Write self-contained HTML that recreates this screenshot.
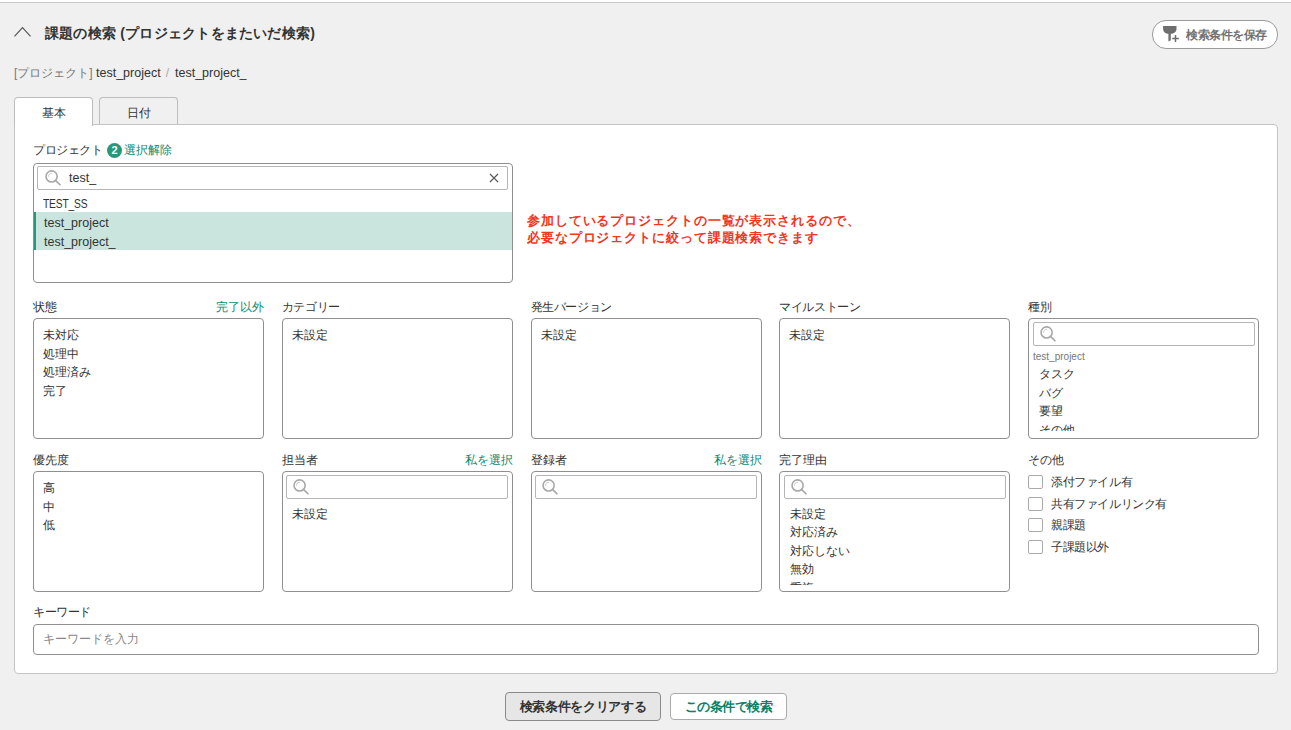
<!DOCTYPE html>
<html lang="ja">
<head>
<meta charset="utf-8">
<style>
*{box-sizing:border-box;margin:0;padding:0}
html,body{width:1291px;height:730px;overflow:hidden}
body{background:#f0f0f0;font-family:"Liberation Sans",sans-serif;color:#333;font-size:12px;position:relative}
.abs{position:absolute}
.topline{left:0;top:0;width:1291px;height:3px;background:#fff;border-bottom:1px solid #c8c8c8}
.title{left:45px;top:25px;font-size:14px;font-weight:bold;color:#333;white-space:nowrap;line-height:17px;letter-spacing:0.23px}
.savebtn{left:1152px;top:20px;width:126px;height:29px;border:1px solid #9a9a9a;border-radius:14px;background:#fff}
.savetxt{left:1186px;top:28px;letter-spacing:-0.45px;font-size:12px;line-height:15px;color:#727272;font-weight:bold;white-space:nowrap}
.crumb{left:14px;top:66px;font-size:12px;line-height:15px;white-space:nowrap;color:#333}
.crumb .g{color:#777}
.crumb .sl{color:#aaa;margin:0 6px 0 5px}
.tab{top:97px;height:28px;border:1px solid #bdbdbd;border-bottom:none;border-radius:4px 4px 0 0;text-align:center;font-size:12px;line-height:29px;color:#333}
.panel{left:14px;top:124px;width:1264px;height:550px;background:#fff;border:1px solid #c4c4c4;border-radius:0 4px 4px 4px}
.lbl{font-size:12px;line-height:15px;color:#333;white-space:nowrap}
.link{color:#0e8a6e}
.badge{left:107px;top:143px;width:15px;height:15px;border-radius:50%;background:#26997a;color:#fff;font-weight:bold;font-size:11px;line-height:15px;text-align:center}
.box{border:1px solid #8f8f8f;border-radius:4px;background:#fff;overflow:hidden}
.srch{border:1px solid #b5b5b5;background:#fff;border-radius:2px}
.item{font-size:12px;line-height:15px;color:#333;white-space:nowrap}
.hl{background:#c9e5dd;border-left:2px solid #26997a}
.small{font-size:10px;line-height:14px;color:#777;white-space:nowrap}
.clip{overflow:hidden}
.chk{width:15px;height:14px;border:1px solid #aaa;border-radius:2px;background:#fff}
.kw{border:1px solid #8f8f8f;border-radius:4px;background:#fff;font-size:12px;line-height:29px;padding-left:9px;color:#888}
.red{color:#f0371e;font-weight:bold;font-size:13px;line-height:17px;white-space:nowrap;letter-spacing:0.9px}
.btn1{left:505px;top:692px;width:156px;height:29px;background:#e6e6e6;border:1px solid #8a8a8a;border-radius:4px;font-size:13px;font-weight:bold;line-height:27px;text-align:center;color:#333;letter-spacing:-0.35px}
.btn2{left:670px;top:693px;width:117px;height:27px;background:#fff;border:1px solid #aaa;border-radius:4px;font-size:13px;font-weight:bold;line-height:25px;text-align:center;color:#0a8068;letter-spacing:-0.45px}

.lat{font-size:12.5px}
.caps{font-size:12.5px;letter-spacing:-0.2px;transform:scaleX(0.82);transform-origin:0 0}

.k{letter-spacing:-0.4px}

</style>
</head>
<body>
<div class="abs topline"></div>
<svg class="abs" style="left:13px;top:26px" width="20" height="13" viewBox="0 0 20 13"><polyline points="1.5,10.4 9.5,1.6 17.5,10.4" fill="none" stroke="#555" stroke-width="1.15"/></svg>
<div class="abs title">課題の検索 (プロジェクトをまたいだ検索)</div>
<div class="abs savebtn"></div>
<svg class="abs" style="left:1158px;top:22px" width="26" height="22" viewBox="0 0 26 22"><path d="M5.1 4.1H18.5V6.9C18.5 9.8 15.8 11.7 12.8 11.7V18.2L10.4 19.6V11.7C7.6 11.7 5.1 9.8 5.1 6.9Z" fill="#6e6e6e"/><path d="M14.2 16.5H20.8M17.5 13.1V19.9" stroke="#6e6e6e" stroke-width="1.5"/></svg>
<div class="abs savetxt">検索条件を保存</div>
<div class="abs crumb"><span class="g">[プロジェクト]</span> <span class="lat">test_project</span><span class="g sl">/</span><span class="lat">test_project_</span></div>
<div class="abs panel"></div>
<div class="abs tab" style="left:14px;width:79px;background:#fff;z-index:2;height:29px;line-height:31px">基本</div>
<div class="abs tab" style="left:99px;width:79px;background:#f0f0f0;height:27px;line-height:30px">日付</div>
<div class="abs lbl k" style="left:33px;top:143px">プロジェクト</div>
<div class="abs badge">2</div>
<div class="abs lbl link" style="left:124px;top:143px">選択解除</div>
<div class="abs box" style="left:33px;top:163px;width:480px;height:120px"></div>
<div class="abs srch" style="left:37px;top:166px;width:471px;height:24px"></div><svg class="abs" style="left:43px;top:168px" width="20" height="20" viewBox="0 0 20 20"><circle cx="8.60" cy="8.45" r="5.55" fill="none" stroke="#a8a8a8" stroke-width="1.6"/><path d="M12.70 12.55L17.00 16.75" stroke="#a8a8a8" stroke-width="1.7" stroke-linecap="round"/><path d="M5.50 8.65A3.1 3.1 0 0 1 8.80 5.35" stroke="#b8b8b8" stroke-width="0.85" fill="none"/></svg><svg class="abs" style="left:489px;top:173px" width="10" height="10" viewBox="0 0 10 10"><path d="M1 1L9 9M9 1L1 9" stroke="#555" stroke-width="1.1" fill="none"/></svg>
<div class="abs" style="left:69px;top:170px;font-size:12.5px;line-height:16px" class="lat">test_</div>
<div class="abs hl" style="left:34px;top:212px;width:478px;height:38px"></div>
<div class="abs item lat caps" style="left:43px;top:197.0px">TEST_SS</div>
<div class="abs item lat" style="left:44px;top:216px">test_project</div><div class="abs item lat" style="left:44px;top:235px">test_project_</div>
<div class="abs red" style="left:527px;top:212px">参加しているプロジェクトの一覧が表示されるので、<br>必要なプロジェクトに絞って課題検索できます</div>
<div class="abs lbl k" style="left:33px;top:300px">状態</div>
<div class="abs box" style="left:33px;top:318px;width:231px;height:121px"></div>
<div class="abs lbl k" style="left:281.75px;top:300px">カテゴリー</div>
<div class="abs box" style="left:281.75px;top:318px;width:231px;height:121px"></div>
<div class="abs lbl k" style="left:530.5px;top:300px">発生バージョン</div>
<div class="abs box" style="left:530.5px;top:318px;width:231px;height:121px"></div>
<div class="abs lbl k" style="left:779.25px;top:300px">マイルストーン</div>
<div class="abs box" style="left:779.25px;top:318px;width:231px;height:121px"></div>
<div class="abs lbl k" style="left:1028px;top:300px">種別</div>
<div class="abs box" style="left:1028px;top:318px;width:231px;height:121px"></div>
<div class="abs lbl link" style="left:33px;width:231px;text-align:right;top:300px">完了以外</div>
<div class="abs item" style="left:43px;top:328.0px">未対応</div><div class="abs item" style="left:43px;top:346.5px">処理中</div><div class="abs item" style="left:43px;top:365.0px">処理済み</div><div class="abs item" style="left:43px;top:383.5px">完了</div>
<div class="abs item" style="left:291.75px;top:328.0px">未設定</div>
<div class="abs item" style="left:540.5px;top:328.0px">未設定</div>
<div class="abs item" style="left:789.25px;top:328.0px">未設定</div>
<div class="abs srch" style="left:1033px;top:322px;width:222px;height:24px"></div><svg class="abs" style="left:1038px;top:324px" width="20" height="20" viewBox="0 0 20 20"><circle cx="8.60" cy="8.45" r="5.55" fill="none" stroke="#a8a8a8" stroke-width="1.6"/><path d="M12.70 12.55L17.00 16.75" stroke="#a8a8a8" stroke-width="1.7" stroke-linecap="round"/><path d="M5.50 8.65A3.1 3.1 0 0 1 8.80 5.35" stroke="#b8b8b8" stroke-width="0.85" fill="none"/></svg>
<div class="abs small" style="left:1033px;top:350px">test_project</div>
<div class="abs clip" style="left:1029px;top:360px;width:228px;height:70.5px"><div class="abs item" style="left:10px;top:7.0px">タスク</div><div class="abs item" style="left:10px;top:25.6px">バグ</div><div class="abs item" style="left:10px;top:44.2px">要望</div><div class="abs item" style="left:10px;top:62.800000000000004px">その他</div></div>
<div class="abs lbl" style="left:33px;top:453px">優先度</div>
<div class="abs box" style="left:33px;top:471px;width:231px;height:121px"></div>
<div class="abs lbl" style="left:281.75px;top:453px">担当者</div>
<div class="abs box" style="left:281.75px;top:471px;width:231px;height:121px"></div>
<div class="abs lbl" style="left:530.5px;top:453px">登録者</div>
<div class="abs box" style="left:530.5px;top:471px;width:231px;height:121px"></div>
<div class="abs lbl" style="left:779.25px;top:453px">完了理由</div>
<div class="abs box" style="left:779.25px;top:471px;width:231px;height:121px"></div>
<div class="abs lbl" style="left:1028px;top:453px">その他</div>
<div class="abs lbl link" style="left:281.75px;width:231px;text-align:right;top:453px">私を選択</div>
<div class="abs lbl link" style="left:530.5px;width:231px;text-align:right;top:453px">私を選択</div>
<div class="abs item" style="left:43px;top:481.0px">高</div><div class="abs item" style="left:43px;top:499.5px">中</div><div class="abs item" style="left:43px;top:518.0px">低</div>
<div class="abs srch" style="left:286px;top:475px;width:222px;height:24px"></div><svg class="abs" style="left:291px;top:477px" width="20" height="20" viewBox="0 0 20 20"><circle cx="8.60" cy="8.45" r="5.55" fill="none" stroke="#a8a8a8" stroke-width="1.6"/><path d="M12.70 12.55L17.00 16.75" stroke="#a8a8a8" stroke-width="1.7" stroke-linecap="round"/><path d="M5.50 8.65A3.1 3.1 0 0 1 8.80 5.35" stroke="#b8b8b8" stroke-width="0.85" fill="none"/></svg>
<div class="abs item" style="left:291.75px;top:507.0px">未設定</div>
<div class="abs srch" style="left:535px;top:475px;width:222px;height:24px"></div><svg class="abs" style="left:540px;top:477px" width="20" height="20" viewBox="0 0 20 20"><circle cx="8.60" cy="8.45" r="5.55" fill="none" stroke="#a8a8a8" stroke-width="1.6"/><path d="M12.70 12.55L17.00 16.75" stroke="#a8a8a8" stroke-width="1.7" stroke-linecap="round"/><path d="M5.50 8.65A3.1 3.1 0 0 1 8.80 5.35" stroke="#b8b8b8" stroke-width="0.85" fill="none"/></svg>
<div class="abs srch" style="left:784px;top:475px;width:222px;height:24px"></div><svg class="abs" style="left:789px;top:477px" width="20" height="20" viewBox="0 0 20 20"><circle cx="8.60" cy="8.45" r="5.55" fill="none" stroke="#a8a8a8" stroke-width="1.6"/><path d="M12.70 12.55L17.00 16.75" stroke="#a8a8a8" stroke-width="1.7" stroke-linecap="round"/><path d="M5.50 8.65A3.1 3.1 0 0 1 8.80 5.35" stroke="#b8b8b8" stroke-width="0.85" fill="none"/></svg>
<div class="abs clip" style="left:780.25px;top:500px;width:228px;height:85px"><div class="abs item" style="left:10px;top:6.5px">未設定</div><div class="abs item" style="left:10px;top:25.0px">対応済み</div><div class="abs item" style="left:10px;top:43.5px">対応しない</div><div class="abs item" style="left:10px;top:62.0px">無効</div><div class="abs item" style="left:10px;top:80.5px">重複</div></div>
<div class="abs chk" style="left:1028px;top:475.0px"></div>
<div class="abs item k" style="left:1051px;top:475.0px">添付ファイル有</div>
<div class="abs chk" style="left:1028px;top:496.7px"></div>
<div class="abs item k" style="left:1051px;top:496.7px">共有ファイルリンク有</div>
<div class="abs chk" style="left:1028px;top:518.4px"></div>
<div class="abs item k" style="left:1051px;top:518.4px">親課題</div>
<div class="abs chk" style="left:1028px;top:540.1px"></div>
<div class="abs item k" style="left:1051px;top:540.1px">子課題以外</div>
<div class="abs lbl k" style="left:33px;top:605px">キーワード</div>
<div class="abs kw" style="left:33px;top:624px;width:1226px;height:31px">キーワードを入力</div>
<div class="abs btn1">検索条件をクリアする</div>
<div class="abs btn2">この条件で検索</div>
</body>
</html>
